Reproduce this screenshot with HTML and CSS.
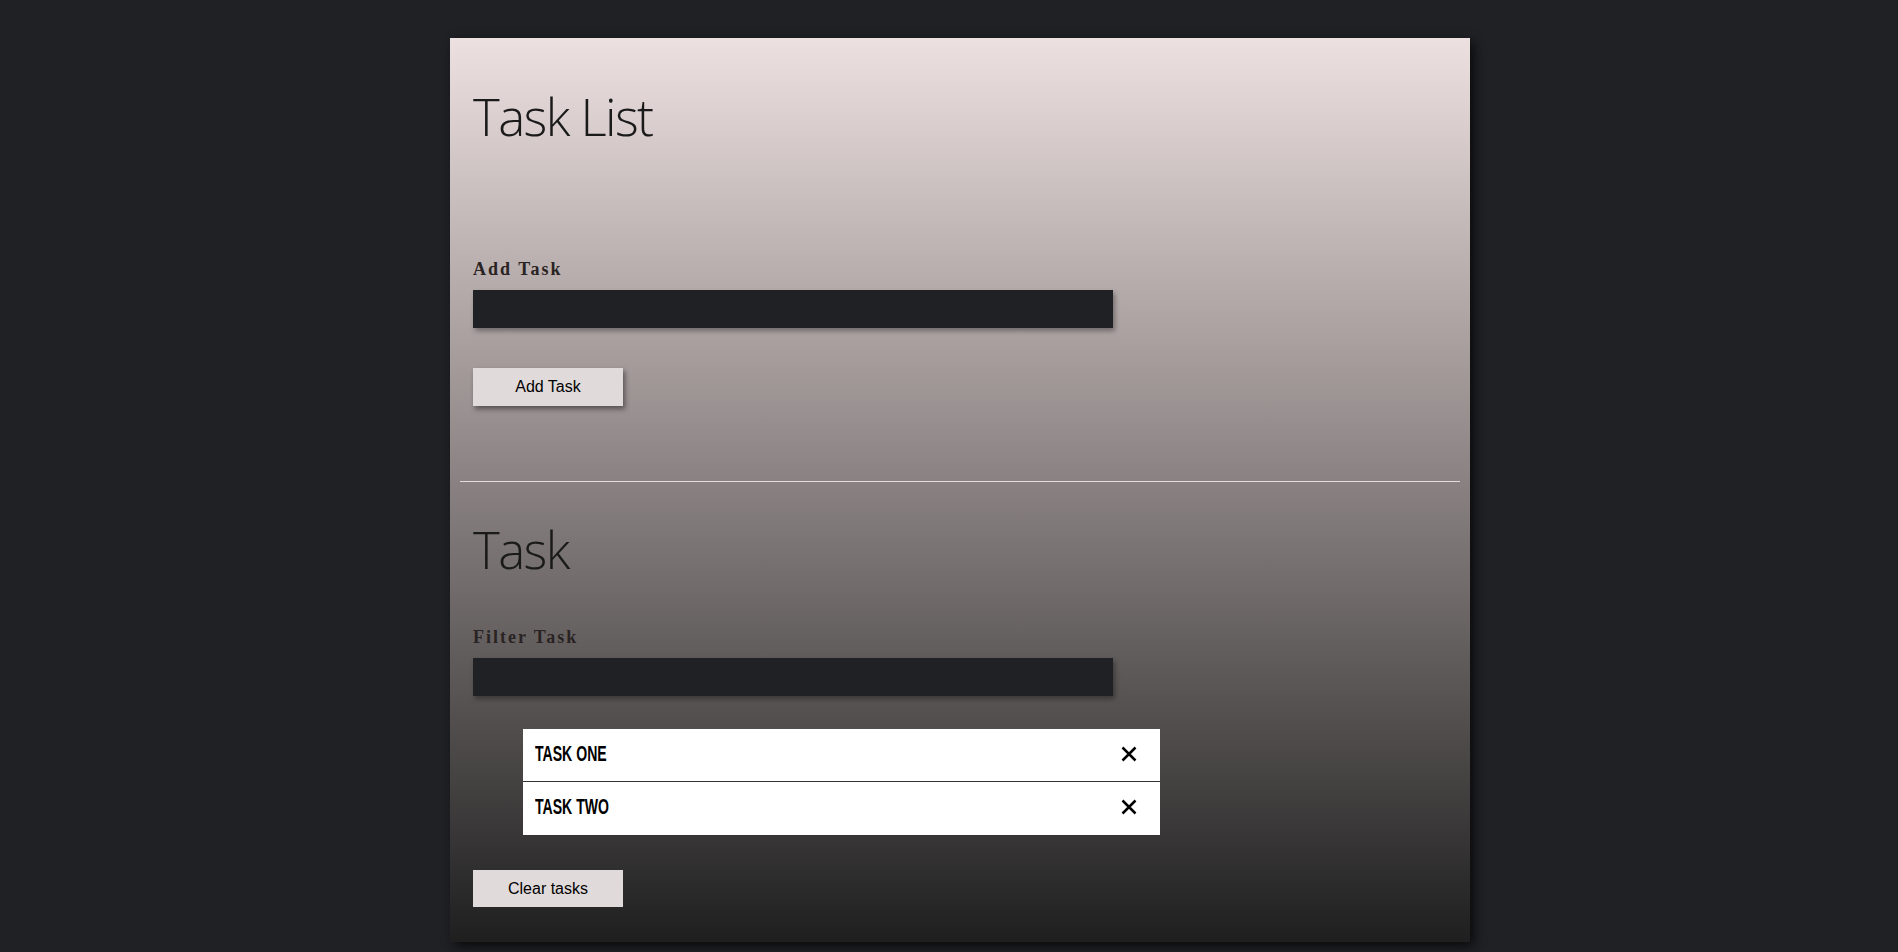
FILE: index.html
```html
<!DOCTYPE html>
<html lang="en">
<head>
<meta charset="utf-8">
<title>Task List</title>
<link rel="stylesheet" href="styles.css">
</head>
<body>
  <main class="card">
    <section class="section section-add">
      <h1 class="title">Task List</h1>
      <label class="label" for="task">Add Task</label>
      <input class="field" id="task" type="text">
      <button class="btn btn-shadow" type="button">Add Task</button>
    </section>
    <hr class="divider">
    <section class="section section-tasks">
      <h1 class="title">Task</h1>
      <label class="label" for="filter">Filter Task</label>
      <input class="field" id="filter" type="text">
      <ul class="task-list">
        <li class="task-item"><span class="task-name">Task One</span>
          <svg class="task-del" width="16" height="16" viewBox="0 0 16 16"><path d="M1.5 1.5 L14.5 14.5 M14.5 1.5 L1.5 14.5" stroke="#000" stroke-width="2.5" fill="none"/></svg></li>
        <li class="task-item"><span class="task-name">Task Two</span>
          <svg class="task-del" width="16" height="16" viewBox="0 0 16 16"><path d="M1.5 1.5 L14.5 14.5 M14.5 1.5 L1.5 14.5" stroke="#000" stroke-width="2.5" fill="none"/></svg></li>
      </ul>
      <button class="btn btn-clear" type="button">Clear tasks</button>
    </section>
  </main>
</body>
</html>
```
FILE: styles.css
```css
html, body {
  margin: 0;
  padding: 0;
}
body {
  background: #202125;
  display: flex;
  justify-content: center;
  padding-left: 22px;
  min-height: 952px;
  box-sizing: border-box;
  overflow: hidden;
}
.card {
  width: 1020px;
  height: 904px;
  margin-top: 38px;
  box-sizing: border-box;
  padding: 0 10px;
  background: linear-gradient(to bottom, #ede0e0 0%, #8a8282 49%, #1f1f1f 100%);
  box-shadow: 4px 4px 10px #0b0b0d;
  display: flex;
  flex-direction: column;
}
.section {
  padding: 0 13px;
  display: flex;
  flex-direction: column;
  align-items: flex-start;
}
.title {
  font-family: "Open Sans", "Segoe UI", sans-serif;
  font-weight: 300;
  font-size: 51px;
  line-height: 60px;
  letter-spacing: -1.6px;
  color: #1a1a1a;
  margin: 0;
}
.section-add .title {
  margin-top: 48px;
}
.section-tasks .title {
  margin-top: 37px;
}
.label {
  font-family: "Liberation Serif", "Times New Roman", serif;
  font-weight: bold;
  font-size: 18px;
  line-height: 20px;
  letter-spacing: 2px;
  color: #2a2323;
}
.section-add .label {
  margin-top: 113px;
}
.section-tasks .label {
  margin-top: 48px;
}
.field {
  display: block;
  width: 640px;
  height: 38px;
  box-sizing: border-box;
  margin: 11px 0 0;
  border: none;
  background: #202125;
  box-shadow: 2px 3px 5px rgba(0, 0, 0, 0.35);
  color: #eee;
  outline: none;
}
.btn {
  width: 150px;
  height: 38px;
  border: none;
  background: #e0dada;
  font-family: "Liberation Sans", Arial, sans-serif;
  font-size: 16px;
  color: #000;
  padding: 0;
}
.btn-shadow {
  margin-top: 40px;
  box-shadow: 2px 3px 5px rgba(0, 0, 0, 0.45);
}
.btn-clear {
  height: 37px;
  margin-top: 34px;
}
.divider {
  margin: 75px 0 0;
  border: none;
  height: 1px;
  background: #e4dede;
}
.task-list {
  list-style: none;
  margin: 33px 0 0 50px;
  padding: 0;
  width: 637px;
}
.task-item {
  display: flex;
  align-items: center;
  justify-content: space-between;
  height: 53px;
  padding: 0 23px 3px 12px;
  box-sizing: border-box;
  background: #fff;
  border-bottom: 1px solid #333;
}
.task-item + .task-item {
  height: 54px;
}
.task-name {
  display: inline-block;
  font-family: "Liberation Sans", Arial, sans-serif;
  font-weight: bold;
  font-size: 22px;
  line-height: 24px;
  text-transform: uppercase;
  color: #000;
  transform: scaleX(0.64);
  transform-origin: left center;
}
.task-del {
  display: block;
}
```
